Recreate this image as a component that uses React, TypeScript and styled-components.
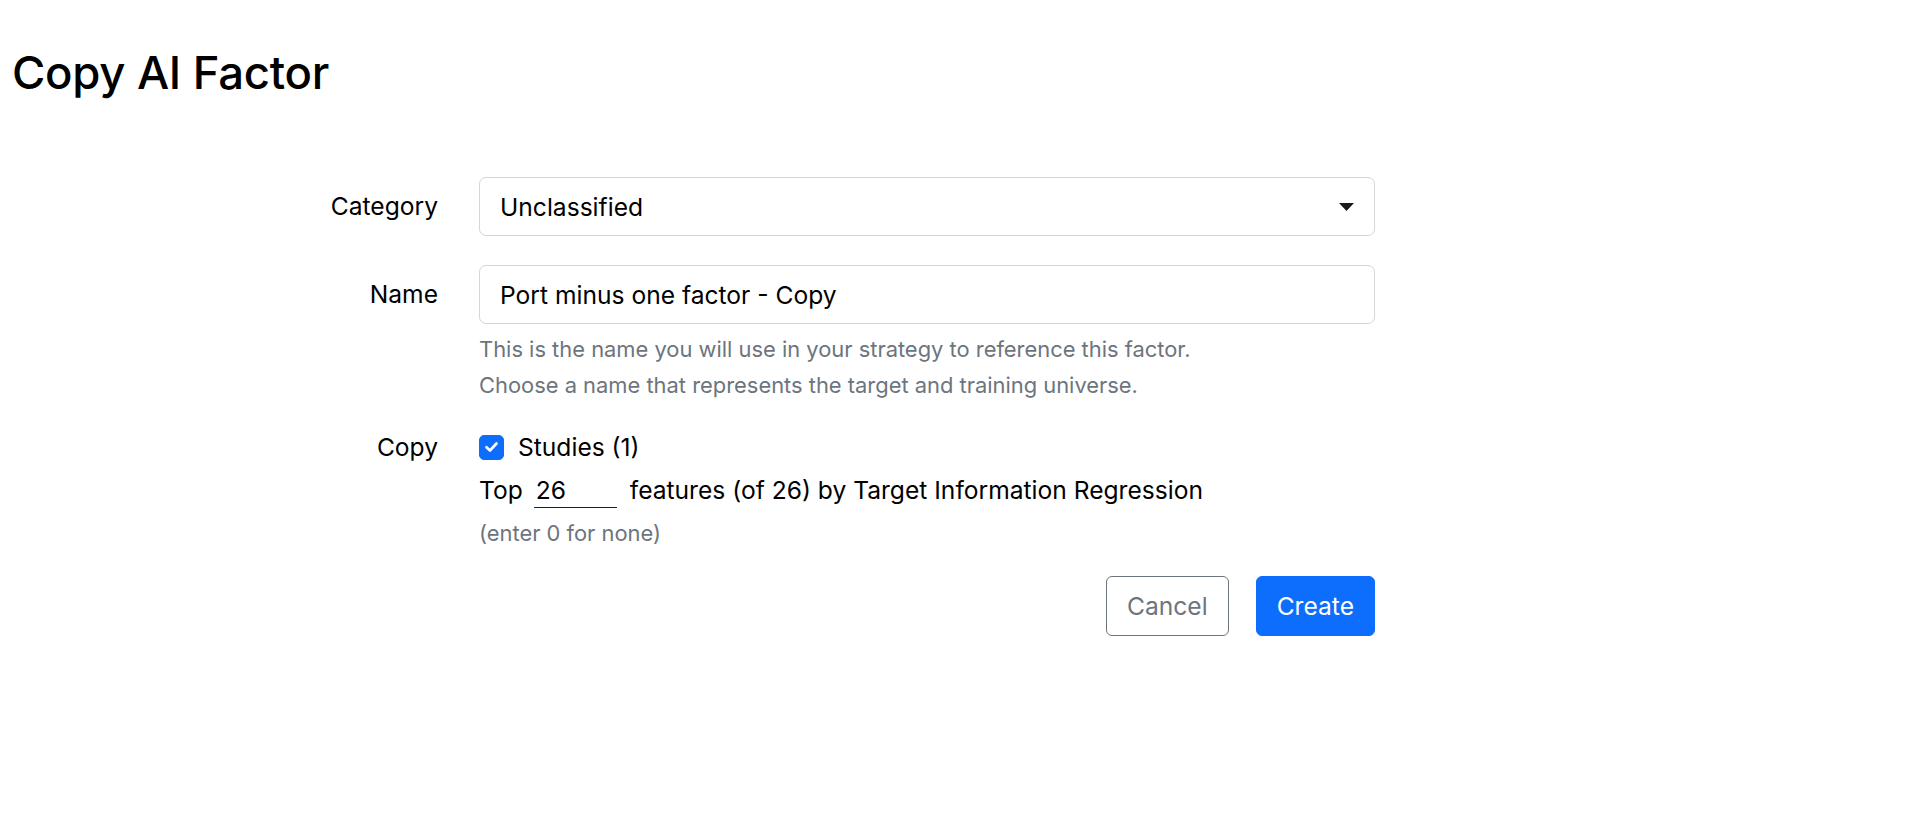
import React, { useState } from "react";
import styled, { createGlobalStyle } from "styled-components";

const GlobalStyle = createGlobalStyle`
  html, body {
    margin: 0;
    padding: 0;
    background: #ffffff;
  }
  body {
    font-family: Inter, "Noto Sans", "Liberation Sans", sans-serif;
    color: #212529;
  }
  * {
    box-sizing: border-box;
  }
`;

const Page = styled.div`
  width: 1920px;
  height: 834px;
  padding: 46px 12px 0;
`;

const Title = styled.h1`
  margin: 0;
  font-size: 45.5px;
  line-height: 54px;
  font-weight: 500;
  letter-spacing: -0.3px;
  color: #000;
`;

const Form = styled.form`
  margin: 77px 0 0 226px;
  width: 1137px;
`;

const Row = styled.div<{ $top?: number }>`
  display: grid;
  grid-template-columns: 200px 896px;
  column-gap: 41px;
  align-items: start;
  margin-top: ${(p) => p.$top ?? 0}px;
`;

const Label = styled.label<{ $lh?: number }>`
  text-align: right;
  font-size: 24.6px;
  line-height: ${(p) => p.$lh ?? 59}px;
  color: #000;
`;

const Field = styled.div`
  display: flex;
  flex-direction: column;
`;

const SelectBox = styled.div`
  position: relative;
  height: 59px;
  border: 1px solid #d3d6da;
  border-radius: 7px;
  padding: 0 20px;
  display: flex;
  align-items: center;
  justify-content: space-between;
  font-size: 24.6px;
  color: #000;
  background: #fff;
`;

const TextInput = styled.input`
  height: 59px;
  border: 1px solid #d3d6da;
  border-radius: 7px;
  padding: 0 20px;
  font-family: inherit;
  font-size: 24.6px;
  color: #000;
  outline: none;
`;

const Help = styled.div`
  margin-top: 7px;
  font-size: 21.9px;
  line-height: 36px;
  color: #6c757d;
`;

const CheckLine = styled.label`
  display: flex;
  align-items: center;
  gap: 14px;
  height: 36px;
  font-size: 24.6px;
  color: #000;
`;

const CheckBox = styled.span<{ $on: boolean }>`
  width: 25px;
  height: 25px;
  border-radius: 5px;
  display: inline-flex;
  align-items: center;
  justify-content: center;
  background: ${(p) => (p.$on ? "#0d6efd" : "#fff")};
  border: 1px solid ${(p) => (p.$on ? "#0d6efd" : "#ced4da")};
`;

const TopLine = styled.div`
  display: flex;
  align-items: center;
  margin-top: 6px;
  height: 38px;
  font-size: 24.6px;
  color: #000;
`;

const CountInput = styled.input`
  width: 83px;
  height: 36px;
  margin: 0 13px 0 11px;
  padding: 0 2px;
  border: none;
  border-bottom: 1.5px solid #222;
  font-family: inherit;
  font-size: 24.6px;
  color: #000;
  outline: none;
  background: transparent;
`;

const Hint = styled.div`
  margin-top: 8px;
  font-size: 21.9px;
  line-height: 32px;
  color: #6c757d;
`;

const Actions = styled.div`
  grid-column: 2;
  display: flex;
  justify-content: flex-end;
  gap: 27px;
`;

const Button = styled.button<{ $primary?: boolean }>`
  height: 60px;
  padding: 0 20px;
  border-radius: 6px;
  font-family: inherit;
  font-size: 24.6px;
  border: 1px solid ${(p) => (p.$primary ? "#0d6efd" : "#6c757d")};
  background: ${(p) => (p.$primary ? "#0d6efd" : "#fff")};
  color: ${(p) => (p.$primary ? "#fff" : "#6c757d")};
  cursor: pointer;
`;

const Caret = () => (
  <svg width="15" height="8" viewBox="0 0 15 8">
    <path d="M0 0 L15 0 L7.5 8 Z" fill="#1a1a1a" />
  </svg>
);

const Tick = () => (
  <svg width="15" height="12" viewBox="0 0 15 12">
    <path
      d="M2.5 6.2 L6 9.5 L12.5 2.5"
      fill="none"
      stroke="#fff"
      strokeWidth="2.6"
      strokeLinecap="round"
      strokeLinejoin="round"
    />
  </svg>
);

export default function App() {
  const [name, setName] = useState("Port minus one factor - Copy");
  const [studies, setStudies] = useState(true);
  const [top, setTop] = useState("26");

  return (
    <Page>
      <GlobalStyle />
      <Title>Copy AI Factor</Title>
      <Form onSubmit={(e) => e.preventDefault()}>
        <Row>
          <Label>Category</Label>
          <SelectBox>
            <span>Unclassified</span>
            <Caret />
          </SelectBox>
        </Row>

        <Row $top={29}>
          <Label>Name</Label>
          <Field>
            <TextInput value={name} onChange={(e) => setName(e.target.value)} />
            <Help>
              This is the name you will use in your strategy to reference this factor.
              <br />
              Choose a name that represents the target and training universe.
            </Help>
          </Field>
        </Row>

        <Row $top={26}>
          <Label $lh={36}>Copy</Label>
          <Field>
            <CheckLine onClick={() => setStudies(!studies)}>
              <CheckBox $on={studies}>{studies && <Tick />}</CheckBox>
              Studies (1)
            </CheckLine>
            <TopLine>
              Top
              <CountInput value={top} onChange={(e) => setTop(e.target.value)} />
              features (of 26) by Target Information Regression
            </TopLine>
            <Hint>(enter 0 for none)</Hint>
          </Field>
        </Row>

        <Row $top={27}>
          <Actions>
            <Button type="button">Cancel</Button>
            <Button type="submit" $primary>
              Create
            </Button>
          </Actions>
        </Row>
      </Form>
    </Page>
  );
}
